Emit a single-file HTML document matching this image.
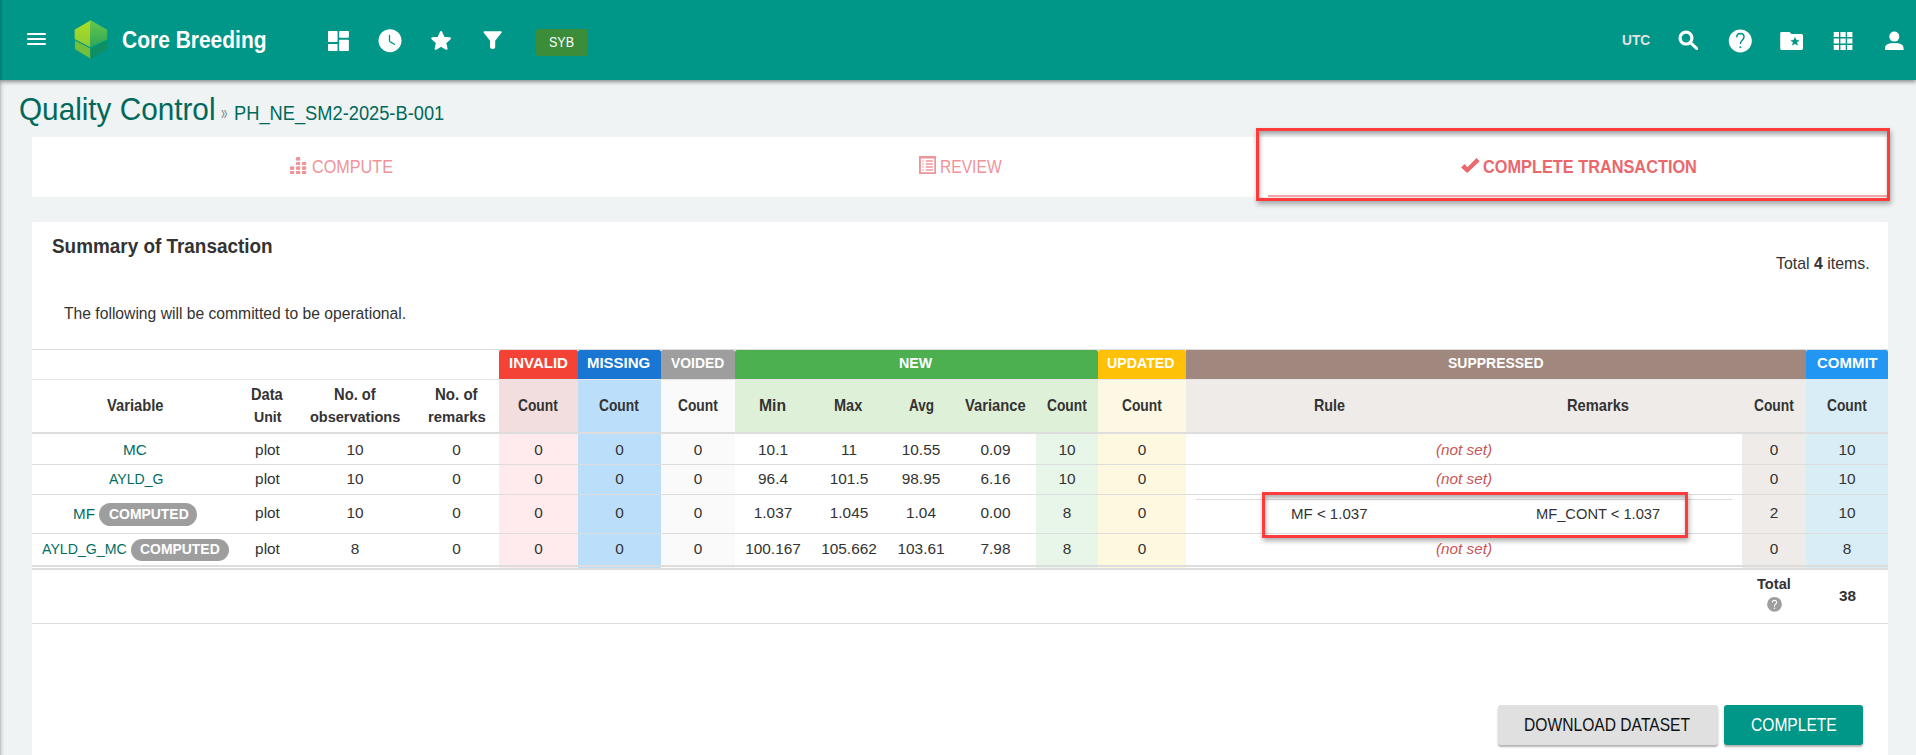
<!DOCTYPE html>
<html><head><meta charset="utf-8">
<style>
*{box-sizing:border-box}
html,body{margin:0;padding:0}
body{width:1916px;height:755px;overflow:hidden;position:relative;background:#eff3f3;font-family:"Liberation Sans",sans-serif;color:#333}
.abs{position:absolute}
.r{position:absolute}
.t{position:absolute;white-space:nowrap;line-height:1;transform-origin:0 0;z-index:7}
.c{position:absolute;white-space:nowrap;line-height:1;text-align:center;color:#333;z-index:3}
#hdr{position:absolute;left:0;top:0;width:1916px;height:80px;background:#009688;box-shadow:0 2px 4px rgba(0,0,0,.42);z-index:5}
#hdr .t{z-index:6}
#leftsh{position:absolute;left:0;top:80px;width:5px;height:675px;background:linear-gradient(to right,rgba(0,0,0,.22),rgba(0,0,0,.06) 40%,rgba(0,0,0,0));z-index:6}
.redbox{position:absolute;border:3px solid #ff3b3b;box-shadow:1px 3px 5px rgba(0,0,0,.32), inset 1px 3px 4px rgba(0,0,0,.32);z-index:4}
.ln{position:absolute;left:32px;width:1856px;background:#dddddd;z-index:2}
.badge{position:absolute;background:#9e9e9e;border-radius:12px;z-index:2}
.btn{position:absolute;border-radius:3px;box-shadow:0 2px 2px rgba(0,0,0,.3)}
</style></head><body>
<div id="hdr">
  <svg class="abs" style="left:27px;top:33px" width="19" height="12" viewBox="0 0 19 12"><rect x="0" y="0" width="19" height="2" rx="1" fill="#fff"/><rect x="0" y="5" width="19" height="2" rx="1" fill="#fff"/><rect x="0" y="10" width="19" height="2" rx="1" fill="#fff"/></svg>
  <svg class="abs" style="left:0;top:0" width="120" height="80" viewBox="0 0 120 80">
    <defs><linearGradient id="gl" x1="0" y1="0" x2="0" y2="1"><stop offset="0" stop-color="#aade26"/><stop offset="0.45" stop-color="#9dd52d"/><stop offset="1" stop-color="#8ccd33"/></linearGradient>
    <linearGradient id="gr" x1="0" y1="0" x2="0" y2="1"><stop offset="0" stop-color="#66c84a"/><stop offset="0.45" stop-color="#4cb951"/><stop offset="1" stop-color="#2fa558"/></linearGradient></defs>
    <polygon points="75.2,30 90.7,21 90.7,46.6 75.2,38.6" fill="url(#gl)" stroke="url(#gl)" stroke-width="1.2" stroke-linejoin="round"/>
    <polygon points="90.7,21 106.6,30 106.6,38.9 90.7,46.6" fill="url(#gr)" stroke="url(#gr)" stroke-width="1.2" stroke-linejoin="round"/>
    <polygon points="75.4,41.2 90.7,49.3 90.7,58.2 75.4,48.9" fill="#74c03c" stroke="#74c03c" stroke-width="1" stroke-linejoin="round"/>
    <polygon points="90.7,49.3 106.5,41.2 106.5,48.9 90.7,58.2" fill="#0e9064" stroke="#0e9064" stroke-width="1" stroke-linejoin="round"/>
  </svg>
  <svg class="abs" style="left:328px;top:31px" width="21" height="20" viewBox="0 0 21 20"><rect x="0" y="0" width="9.6" height="11" rx="0.8" fill="#fff"/><rect x="0" y="13" width="9.6" height="7" rx="0.8" fill="#fff"/><rect x="11.1" y="0" width="9.8" height="6.8" rx="0.8" fill="#fff"/><rect x="11.1" y="8.8" width="9.8" height="11.2" rx="0.8" fill="#fff"/></svg>
  <svg class="abs" style="left:378px;top:29px" width="24" height="24" viewBox="0 0 24 24"><circle cx="12" cy="11.7" r="11.5" fill="#fff"/><path d="M11.5 6.3 V11.6 Q11.5 12.4 12.3 12.9 L16.4 15.3" stroke="#009688" stroke-width="1.3" fill="none" stroke-linecap="round"/></svg>
  <svg class="abs" style="left:430px;top:30px" width="23" height="22" viewBox="0 0 23 22"><polygon points="11.10,2.08 13.63,7.80 19.85,8.44 15.19,12.61 16.51,18.72 11.10,15.58 5.69,18.72 7.01,12.61 2.35,8.44 8.57,7.80" fill="#fff" stroke="#fff" stroke-width="2.2" stroke-linejoin="round"/></svg>
  <svg class="abs" style="left:483px;top:30px" width="20" height="20" viewBox="0 0 20 20"><path d="M0.6 1.8 Q0.6 1.2 1.2 1.2 H18.1 Q18.7 1.2 18.7 1.8 V2.6 L12.2 10.7 V17.2 Q12.2 18.9 9.6 18.9 Q7.05 18.9 7.05 17.2 V10.8 L0.6 2.6 Z" fill="#fff"/></svg>
  <div class="abs" style="left:536px;top:29px;width:52px;height:27px;background:#3b8d3a;border-radius:3px"></div>
  <svg class="abs" style="left:1677px;top:30px" width="23" height="21" viewBox="0 0 23 21"><circle cx="9" cy="8.05" r="5.95" stroke="#fff" stroke-width="3.2" fill="none"/><path d="M13.4 12.6 L19.6 18.4" stroke="#fff" stroke-width="3" stroke-linecap="round"/></svg>
  <svg class="abs" style="left:1728px;top:29px" width="24" height="24" viewBox="0 0 24 24"><circle cx="12.3" cy="11.9" r="11.5" fill="#fff"/><path d="M8.7 8.3 Q8.9 4.6 12.4 4.6 Q16 4.7 16 7.9 Q15.9 9.9 14 11.5 Q12.4 12.8 12.4 15" stroke="#009688" stroke-width="1.5" fill="none"/><circle cx="12.4" cy="18.3" r="1" fill="#009688"/></svg>
  <svg class="abs" style="left:1780px;top:31px" width="24" height="20" viewBox="0 0 24 20"><path d="M1.5 1 H9.5 L11.6 2.9 H21.5 Q23 2.9 23 4.4 V17.6 Q23 19 21.5 19 H1.5 Q0.2 19 0.2 17.6 V2.4 Q0.2 1 1.5 1 Z" fill="#fff"/><path d="M15 6.3 L16.2 9.1 L19.2 9.4 L16.9 11.3 L17.6 14.3 L15 12.7 L12.4 14.3 L13.1 11.3 L10.8 9.4 L13.8 9.1 Z" fill="#009688" stroke="#009688" stroke-width="0.4" stroke-linejoin="round"/></svg>
  <svg class="abs" style="left:1833px;top:31px" width="21" height="20" viewBox="0 0 21 20"><g fill="#fff"><rect x="0.7" y="1" width="5.3" height="5"/><rect x="7.4" y="1" width="5.3" height="5"/><rect x="14.1" y="1" width="5.3" height="5"/><rect x="0.7" y="7.5" width="5.3" height="5"/><rect x="7.4" y="7.5" width="5.3" height="5"/><rect x="14.1" y="7.5" width="5.3" height="5"/><rect x="0.7" y="14" width="5.3" height="5"/><rect x="7.4" y="14" width="5.3" height="5"/><rect x="14.1" y="14" width="5.3" height="5"/></g></svg>
  <svg class="abs" style="left:1884px;top:31px" width="22" height="20" viewBox="0 0 22 20"><circle cx="10.3" cy="5.6" r="5" fill="#fff"/><path d="M1 17 Q1 12 10.3 12 Q19.6 12 19.6 17 V19 H1 Z" fill="#fff"/></svg>
</div>
<div id="leftsh"></div>
<div class="abs" style="left:0;top:0;width:3px;height:80px;z-index:6;background:linear-gradient(to right,rgba(0,0,0,.18),rgba(0,0,0,0))"></div>

<!-- tabs panel -->
<div class="r" style="left:32px;top:137px;width:1856px;height:60px;background:#fff"></div>
<!-- compute icon -->
<svg class="abs" style="left:289px;top:156px;z-index:3" width="19" height="19" viewBox="0 0 19 19" fill="#f0949a">
  <rect x="7" y="1" width="4.2" height="3.8" rx="1"/>
  <rect x="7" y="6" width="4.2" height="3" rx="0.5"/><rect x="13" y="6" width="4.2" height="3" rx="0.5"/>
  <rect x="1" y="10.3" width="4.2" height="3.6" rx="1"/><rect x="7" y="10.3" width="4.2" height="3.6" rx="1"/><rect x="13" y="10.3" width="4.2" height="3.6" rx="1"/>
  <rect x="1" y="15" width="4.2" height="3" rx="0.3"/><rect x="7" y="15" width="4.2" height="3" rx="0.3"/><rect x="13" y="15" width="4.2" height="3" rx="0.3"/>
</svg>
<!-- review icon -->
<svg class="abs" style="left:918px;top:155px;z-index:3" width="19" height="20" viewBox="0 0 19 20">
  <path fill="#f0949a" fill-rule="evenodd" d="M1 1 H18 V19 H1 Z M2.9 3.6 V17.2 H16.3 V3.6 Z"/>
  <g fill="#f0949a"><rect x="4.3" y="5.3" width="1.3" height="1.3"/><rect x="7.6" y="5.2" width="7.4" height="1.5" rx="0.7"/><rect x="4.3" y="8.35" width="1.3" height="1.3"/><rect x="7.6" y="8.25" width="7.4" height="1.5" rx="0.7"/><rect x="4.3" y="11.4" width="1.3" height="1.3"/><rect x="7.6" y="11.3" width="7.4" height="1.5" rx="0.7"/><rect x="4.3" y="14.4" width="1.3" height="1.3"/><rect x="7.6" y="14.3" width="7.4" height="1.5" rx="0.7"/></g>
</svg>
<!-- check icon -->
<svg class="abs" style="left:1460px;top:157px;z-index:3" width="21" height="17" viewBox="0 0 21 17"><polygon points="1.1,10.4 4.5,6.9 7.4,10.2 16.5,0.9 19.6,4.3 7.2,15.9" fill="#ec676d"/></svg>
<!-- active underline -->
<div class="r" style="left:1268px;top:195px;width:619px;height:2px;background:#f4a4a8;z-index:3"></div>
<div class="redbox" style="left:1256px;top:128px;width:634px;height:73px"></div>

<!-- card -->
<div class="r" style="left:32px;top:222px;width:1856px;height:560px;background:#fff;border-radius:2px"></div>

<!-- header row 1 colored -->
<div class="r" style="left:499px;top:350px;width:79px;height:29px;background:#f44336;border-radius:2px 2px 0 0"></div>
<div class="r" style="left:578px;top:350px;width:83px;height:29px;background:#1976d2;border-radius:2px 2px 0 0"></div>
<div class="r" style="left:661px;top:350px;width:74px;height:29px;background:#9e9e9e;border-radius:2px 2px 0 0"></div>
<div class="r" style="left:735px;top:350px;width:363px;height:29px;background:#4caf50;border-radius:2px 2px 0 0"></div>
<div class="r" style="left:1098px;top:350px;width:88px;height:29px;background:#ffc107;border-radius:2px 2px 0 0"></div>
<div class="r" style="left:1186px;top:350px;width:620px;height:29px;background:#a1887f"></div>
<div class="r" style="left:1806px;top:350px;width:82px;height:29px;background:#2196f3;border-radius:2px 2px 0 0"></div>
<!-- header row 2 colored -->
<div class="r" style="left:499px;top:380px;width:79px;height:52px;background:#f2dede"></div>
<div class="r" style="left:578px;top:380px;width:83px;height:52px;background:#bbdefb"></div>
<div class="r" style="left:661px;top:380px;width:74px;height:52px;background:#fafafa"></div>
<div class="r" style="left:735px;top:380px;width:363px;height:52px;background:#dff0d8"></div>
<div class="r" style="left:1098px;top:380px;width:88px;height:52px;background:#fcf8e3"></div>
<div class="r" style="left:1186px;top:380px;width:620px;height:52px;background:#efebe9"></div>
<div class="r" style="left:1806px;top:380px;width:82px;height:52px;background:#d9edf7"></div>
<!-- data colored columns 434..568 -->
<div class="r" style="left:499px;top:434px;width:79px;height:134px;background:#ffebee"></div>
<div class="r" style="left:578px;top:434px;width:83px;height:134px;background:#bbdefb"></div>
<div class="r" style="left:661px;top:434px;width:74px;height:134px;background:#fafafa"></div>
<div class="r" style="left:1036px;top:434px;width:62px;height:134px;background:#e8f5e9"></div>
<div class="r" style="left:1098px;top:434px;width:88px;height:134px;background:#fff8e1"></div>
<div class="r" style="left:1742px;top:434px;width:64px;height:134px;background:#efebe9"></div>
<div class="r" style="left:1806px;top:434px;width:82px;height:134px;background:#d9edf7"></div>

<!-- lines -->
<div class="ln" style="top:349px;height:1px"></div>
<div class="ln" style="top:379px;height:1px;background:#e6e6e6"></div>
<div class="ln" style="top:432px;height:2px"></div>
<div class="ln" style="top:464px;height:1px"></div>
<div class="ln" style="top:494px;height:1px"></div>
<div class="ln" style="top:533px;height:1px"></div>
<div class="ln" style="top:565px;height:2px"></div>
<div class="ln" style="top:568px;height:2px"></div>
<div class="r" style="left:32px;top:570px;width:1856px;height:53px;background:#fff"></div>
<div class="ln" style="top:623px;height:1px"></div>
<!-- nested rule table line -->
<div class="r" style="left:1196px;top:499px;width:536px;height:1px;background:#dddddd;z-index:2"></div>

<!-- badges -->
<div class="badge" style="left:99px;top:503px;width:98px;height:23px"></div>
<div class="badge" style="left:131px;top:539px;width:98px;height:22px"></div>

<!-- help circle in total -->
<svg class="abs" style="left:1766px;top:596px;z-index:3" width="17" height="17" viewBox="0 0 17 17"><circle cx="8.5" cy="8.3" r="7.4" fill="#9e9e9e"/><path d="M6.3 6.4 Q6.4 4.3 8.5 4.3 Q10.6 4.4 10.6 6.3 Q10.5 7.6 9.3 8.4 Q8.5 9 8.5 10.4" stroke="#fff" stroke-width="1.1" fill="none"/><circle cx="8.5" cy="12.2" r="0.75" fill="#fff"/></svg>

<div class="redbox" style="left:1262px;top:492px;width:426px;height:46px"></div>

<!-- buttons -->
<div class="btn" style="left:1498px;top:705px;width:220px;height:40px;background:#e0e0e0"></div>
<div class="btn" style="left:1724px;top:705px;width:139px;height:40px;background:#009688"></div>

<div class="t" style="left:121.70px;top:29.38px;font-size:23.62px;color:#fff;font-weight:700;transform:scaleX(0.8887);">Core Breeding</div>
<div class="t" style="left:549.40px;top:35.21px;font-size:14.10px;color:#fff;transform:scaleX(0.8891);">SYB</div>
<div class="t" style="left:1621.70px;top:32.97px;font-size:14.97px;color:#e6e1e1;font-weight:700;transform:scaleX(0.9175);">UTC</div>
<div class="t" style="left:19.07px;top:92.93px;font-size:31.98px;color:#00695c;transform:scaleX(0.9293);">Quality Control</div>
<div class="t" style="left:221.10px;top:102.99px;font-size:19.50px;color:#7a8a88;transform:scaleX(0.5909);">»</div>
<div class="t" style="left:233.86px;top:103.81px;font-size:19.48px;color:#00695c;transform:scaleX(0.9384);">PH_NE_SM2-2025-B-001</div>
<div class="t" style="left:312.20px;top:157.97px;font-size:18.75px;color:#f0949a;transform:scaleX(0.8633);">COMPUTE</div>
<div class="t" style="left:940.17px;top:157.80px;font-size:18.90px;color:#f0949a;transform:scaleX(0.8270);">REVIEW</div>
<div class="t" style="left:1483.00px;top:158.27px;font-size:18.17px;color:#e9676d;font-weight:700;transform:scaleX(0.8986);">COMPLETE TRANSACTION</div>
<div class="t" style="left:51.50px;top:236.89px;font-size:19.91px;color:#333;font-weight:700;transform:scaleX(0.9496);">Summary of Transaction</div>
<div class="t" style="left:64.00px;top:304.59px;font-size:16.13px;color:#333;transform:scaleX(0.9722);">The following will be committed to be operational.</div>
<div class="t" style="left:508.74px;top:355.28px;font-size:15.55px;color:#fff;font-weight:700;transform:scaleX(0.9648);">INVALID</div>
<div class="t" style="left:587.24px;top:355.28px;font-size:15.55px;color:#fff;font-weight:700;transform:scaleX(0.9620);">MISSING</div>
<div class="t" style="left:671.20px;top:355.28px;font-size:15.55px;color:#fff;font-weight:700;transform:scaleX(0.8926);">VOIDED</div>
<div class="t" style="left:899.08px;top:355.28px;font-size:15.55px;color:#fff;font-weight:700;transform:scaleX(0.9158);">NEW</div>
<div class="t" style="left:1107.40px;top:355.28px;font-size:15.55px;color:#fff;font-weight:700;transform:scaleX(0.9124);">UPDATED</div>
<div class="t" style="left:1448.00px;top:355.28px;font-size:15.55px;color:#fff;font-weight:700;transform:scaleX(0.8987);">SUPPRESSED</div>
<div class="t" style="left:1816.60px;top:355.28px;font-size:15.55px;color:#fff;font-weight:700;transform:scaleX(0.9632);">COMMIT</div>
<div class="t" style="left:107.20px;top:398.34px;font-size:15.84px;color:#333;font-weight:700;transform:scaleX(0.9292);">Variable</div>
<div class="t" style="left:251.27px;top:387.31px;font-size:15.70px;color:#333;font-weight:700;transform:scaleX(0.9316);">Data</div>
<div class="t" style="left:254.00px;top:408.63px;font-size:15.26px;color:#333;font-weight:700;transform:scaleX(0.9268);">Unit</div>
<div class="t" style="left:333.66px;top:387.31px;font-size:15.70px;color:#333;font-weight:700;transform:scaleX(0.9387);">No. of</div>
<div class="t" style="left:310.30px;top:408.63px;font-size:15.26px;color:#333;font-weight:700;transform:scaleX(0.9509);">observations</div>
<div class="t" style="left:434.84px;top:387.31px;font-size:15.70px;color:#333;font-weight:700;transform:scaleX(0.9590);">No. of</div>
<div class="t" style="left:427.63px;top:408.63px;font-size:15.26px;color:#333;font-weight:700;transform:scaleX(0.9745);">remarks</div>
<div class="t" style="left:518.30px;top:398.34px;font-size:15.84px;color:#333;font-weight:700;transform:scaleX(0.8700);">Count</div>
<div class="t" style="left:599.30px;top:398.34px;font-size:15.84px;color:#333;font-weight:700;transform:scaleX(0.8700);">Count</div>
<div class="t" style="left:677.80px;top:398.34px;font-size:15.84px;color:#333;font-weight:700;transform:scaleX(0.8700);">Count</div>
<div class="t" style="left:1046.80px;top:398.34px;font-size:15.84px;color:#333;font-weight:700;transform:scaleX(0.8700);">Count</div>
<div class="t" style="left:1121.80px;top:398.34px;font-size:15.84px;color:#333;font-weight:700;transform:scaleX(0.8700);">Count</div>
<div class="t" style="left:1753.80px;top:398.34px;font-size:15.84px;color:#333;font-weight:700;transform:scaleX(0.8700);">Count</div>
<div class="t" style="left:1826.80px;top:398.34px;font-size:15.84px;color:#333;font-weight:700;transform:scaleX(0.8700);">Count</div>
<div class="t" style="left:759.31px;top:398.34px;font-size:15.84px;color:#333;font-weight:700;transform:scaleX(0.9929);">Min</div>
<div class="t" style="left:834.33px;top:398.34px;font-size:15.84px;color:#333;font-weight:700;transform:scaleX(0.9170);">Max</div>
<div class="t" style="left:908.75px;top:398.34px;font-size:15.84px;color:#333;font-weight:700;transform:scaleX(0.8553);">Avg</div>
<div class="t" style="left:965.00px;top:398.34px;font-size:15.84px;color:#333;font-weight:700;transform:scaleX(0.9339);">Variance</div>
<div class="t" style="left:1313.80px;top:398.34px;font-size:15.84px;color:#333;font-weight:700;transform:scaleX(0.9046);">Rule</div>
<div class="t" style="left:1566.57px;top:398.34px;font-size:15.84px;color:#333;font-weight:700;transform:scaleX(0.9263);">Remarks</div>
<div class="t" style="left:1757.40px;top:576.23px;font-size:15.26px;color:#333;font-weight:700;transform:scaleX(0.9613);">Total</div>
<div class="t" style="left:1838.80px;top:587.60px;font-size:15.12px;color:#333;font-weight:700;transform:scaleX(1.0120);">38</div>
<div class="t" style="left:108.50px;top:505.65px;font-size:15.41px;color:#fff;font-weight:700;transform:scaleX(0.9039);">COMPUTED</div>
<div class="t" style="left:140.40px;top:541.08px;font-size:15.55px;color:#fff;font-weight:700;transform:scaleX(0.8959);">COMPUTED</div>
<div class="t" style="left:123.00px;top:441.63px;font-size:15.26px;color:#006e63;">MC</div>
<div class="t" style="left:108.50px;top:471.05px;font-size:15.41px;color:#006e63;transform:scaleX(0.9143);">AYLD_G</div>
<div class="t" style="left:73.12px;top:505.65px;font-size:15.41px;color:#006e63;transform:scaleX(0.9846);">MF</div>
<div class="t" style="left:42.30px;top:541.25px;font-size:15.41px;color:#006e63;transform:scaleX(0.9187);">AYLD_G_MC</div>
<div class="t" style="left:1291.33px;top:506.08px;font-size:15.55px;color:#333;transform:scaleX(0.9674);">MF &lt; 1.037</div>
<div class="t" style="left:1535.56px;top:506.08px;font-size:15.55px;color:#333;transform:scaleX(0.9445);">MF_CONT &lt; 1.037</div>
<div class="t" style="left:1524.41px;top:717.16px;font-size:17.59px;color:#111;transform:scaleX(0.8887);">DOWNLOAD DATASET</div>
<div class="t" style="left:1751.00px;top:717.16px;font-size:17.59px;color:#fff;transform:scaleX(0.8867);">COMPLETE</div>
<div class="t" style="left:1776.00px;top:255.91px;font-size:15.70px;color:#333;transform:scaleX(1.0125);">Total <b>4</b> items.</div>
<div class="c" style="left:239px;width:57px;top:441.51px;font-size:15.4px">plot</div>
<div class="c" style="left:296px;width:118px;top:441.51px;font-size:15.4px">10</div>
<div class="c" style="left:414px;width:85px;top:441.51px;font-size:15.4px">0</div>
<div class="c" style="left:499px;width:79px;top:441.51px;font-size:15.4px">0</div>
<div class="c" style="left:578px;width:83px;top:441.51px;font-size:15.4px">0</div>
<div class="c" style="left:661px;width:74px;top:441.51px;font-size:15.4px">0</div>
<div class="c" style="left:735px;width:76px;top:441.51px;font-size:15.4px">10.1</div>
<div class="c" style="left:811px;width:76px;top:441.51px;font-size:15.4px">11</div>
<div class="c" style="left:887px;width:68px;top:441.51px;font-size:15.4px">10.55</div>
<div class="c" style="left:955px;width:81px;top:441.51px;font-size:15.4px">0.09</div>
<div class="c" style="left:1036px;width:62px;top:441.51px;font-size:15.4px">10</div>
<div class="c" style="left:1098px;width:88px;top:441.51px;font-size:15.4px">0</div>
<div class="c" style="left:1186px;width:556px;top:441.73px;font-size:15.5px;font-style:italic;color:#c55;transform:scaleX(0.985)">(not set)</div>
<div class="c" style="left:1742px;width:64px;top:441.51px;font-size:15.4px">0</div>
<div class="c" style="left:1806px;width:82px;top:441.51px;font-size:15.4px">10</div>
<div class="c" style="left:239px;width:57px;top:471.06px;font-size:15.4px">plot</div>
<div class="c" style="left:296px;width:118px;top:471.06px;font-size:15.4px">10</div>
<div class="c" style="left:414px;width:85px;top:471.06px;font-size:15.4px">0</div>
<div class="c" style="left:499px;width:79px;top:471.06px;font-size:15.4px">0</div>
<div class="c" style="left:578px;width:83px;top:471.06px;font-size:15.4px">0</div>
<div class="c" style="left:661px;width:74px;top:471.06px;font-size:15.4px">0</div>
<div class="c" style="left:735px;width:76px;top:471.06px;font-size:15.4px">96.4</div>
<div class="c" style="left:811px;width:76px;top:471.06px;font-size:15.4px">101.5</div>
<div class="c" style="left:887px;width:68px;top:471.06px;font-size:15.4px">98.95</div>
<div class="c" style="left:955px;width:81px;top:471.06px;font-size:15.4px">6.16</div>
<div class="c" style="left:1036px;width:62px;top:471.06px;font-size:15.4px">10</div>
<div class="c" style="left:1098px;width:88px;top:471.06px;font-size:15.4px">0</div>
<div class="c" style="left:1186px;width:556px;top:471.28px;font-size:15.5px;font-style:italic;color:#c55;transform:scaleX(0.985)">(not set)</div>
<div class="c" style="left:1742px;width:64px;top:471.06px;font-size:15.4px">0</div>
<div class="c" style="left:1806px;width:82px;top:471.06px;font-size:15.4px">10</div>
<div class="c" style="left:239px;width:57px;top:504.86px;font-size:15.4px">plot</div>
<div class="c" style="left:296px;width:118px;top:504.86px;font-size:15.4px">10</div>
<div class="c" style="left:414px;width:85px;top:504.86px;font-size:15.4px">0</div>
<div class="c" style="left:499px;width:79px;top:504.86px;font-size:15.4px">0</div>
<div class="c" style="left:578px;width:83px;top:504.86px;font-size:15.4px">0</div>
<div class="c" style="left:661px;width:74px;top:504.86px;font-size:15.4px">0</div>
<div class="c" style="left:735px;width:76px;top:504.86px;font-size:15.4px">1.037</div>
<div class="c" style="left:811px;width:76px;top:504.86px;font-size:15.4px">1.045</div>
<div class="c" style="left:887px;width:68px;top:504.86px;font-size:15.4px">1.04</div>
<div class="c" style="left:955px;width:81px;top:504.86px;font-size:15.4px">0.00</div>
<div class="c" style="left:1036px;width:62px;top:504.86px;font-size:15.4px">8</div>
<div class="c" style="left:1098px;width:88px;top:504.86px;font-size:15.4px">0</div>
<div class="c" style="left:1742px;width:64px;top:504.86px;font-size:15.4px">2</div>
<div class="c" style="left:1806px;width:82px;top:504.86px;font-size:15.4px">10</div>
<div class="c" style="left:239px;width:57px;top:541.26px;font-size:15.4px">plot</div>
<div class="c" style="left:296px;width:118px;top:541.26px;font-size:15.4px">8</div>
<div class="c" style="left:414px;width:85px;top:541.26px;font-size:15.4px">0</div>
<div class="c" style="left:499px;width:79px;top:541.26px;font-size:15.4px">0</div>
<div class="c" style="left:578px;width:83px;top:541.26px;font-size:15.4px">0</div>
<div class="c" style="left:661px;width:74px;top:541.26px;font-size:15.4px">0</div>
<div class="c" style="left:735px;width:76px;top:541.26px;font-size:15.4px">100.167</div>
<div class="c" style="left:811px;width:76px;top:541.26px;font-size:15.4px">105.662</div>
<div class="c" style="left:887px;width:68px;top:541.26px;font-size:15.4px">103.61</div>
<div class="c" style="left:955px;width:81px;top:541.26px;font-size:15.4px">7.98</div>
<div class="c" style="left:1036px;width:62px;top:541.26px;font-size:15.4px">8</div>
<div class="c" style="left:1098px;width:88px;top:541.26px;font-size:15.4px">0</div>
<div class="c" style="left:1186px;width:556px;top:541.48px;font-size:15.5px;font-style:italic;color:#c55;transform:scaleX(0.985)">(not set)</div>
<div class="c" style="left:1742px;width:64px;top:541.26px;font-size:15.4px">0</div>
<div class="c" style="left:1806px;width:82px;top:541.26px;font-size:15.4px">8</div>
</body></html>
